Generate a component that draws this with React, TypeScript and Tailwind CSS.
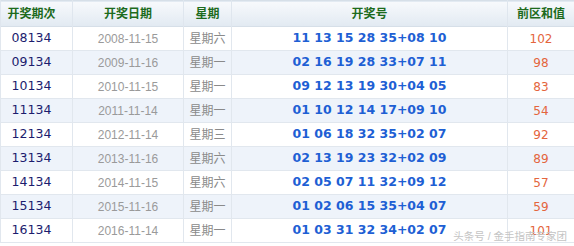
const rows = [
  ['08134', '2008-11-15', '星期六', '11 13 15 28 35+08 10', '102'],
  ['09134', '2009-11-16', '星期一', '02 16 19 28 33+07 11', '98'],
  ['10134', '2010-11-15', '星期一', '09 12 13 19 30+04 05', '83'],
  ['11134', '2011-11-14', '星期一', '01 10 12 14 17+09 10', '54'],
  ['12134', '2012-11-14', '星期三', '01 06 18 32 35+02 07', '92'],
  ['13134', '2013-11-16', '星期六', '02 13 19 23 32+02 09', '89'],
  ['14134', '2014-11-15', '星期六', '02 05 07 11 32+09 12', '57'],
  ['15134', '2015-11-16', '星期一', '01 02 06 15 35+04 07', '59'],
  ['16134', '2016-11-14', '星期一', '01 03 31 32 34+02 07', '101'],
]

const cjk = "font-['Liberation_Sans','Noto_Sans_CJK_SC',sans-serif]"

export default function App() {
  return (
    <div className="relative h-[246px] w-[574px] overflow-hidden bg-white">
      <table className="w-[574px] table-fixed border-collapse">
        <colgroup>
          <col className="w-[72px]" />
          <col className="w-[111px]" />
          <col className="w-[48px]" />
          <col className="w-[276px]" />
          <col className="w-[67px]" />
        </colgroup>
        <thead>
          <tr className="h-[26px] border-t border-b border-[#d6dfe8] bg-gradient-to-b from-[#f7f9fc] to-[#e2eaf2]">
            {['开奖期次', '开奖日期', '星期', '开奖号', '前区和值'].map((h, i) => (
              <th
                key={h}
                className={`border-x border-[#dfe6ee] p-0 text-center text-[12px] font-bold text-[#1d6b1d] ${cjk} ${i === 0 ? 'pr-[10px]' : ''}`}
              >
                {h}
              </th>
            ))}
          </tr>
        </thead>
        <tbody>
          {rows.map((r, i) => (
            <tr key={r[0]} className={`h-[24px] border-b border-[#e1e7ee] ${i % 2 ? 'bg-[#eef3fa]' : 'bg-white'}`}>
              <td className="border-x border-[#e1e7ee] p-0 pr-[10px] text-center font-['DejaVu_Sans',sans-serif] text-[12.5px] text-[#1c1c6e]">
                {r[0]}
              </td>
              <td className="border-x border-[#e1e7ee] p-0 text-center font-['Liberation_Sans',sans-serif] text-[12px] text-[#9a9a9a]">
                {r[1]}
              </td>
              <td className={`border-x border-[#e1e7ee] p-0 text-center text-[12px] text-[#8a8a8a] ${cjk}`}>
                {r[2]}
              </td>
              <td className="border-x border-[#e1e7ee] p-0 text-center font-['DejaVu_Sans',sans-serif] text-[12.5px] font-bold text-[#1e5fd4]">
                {r[3]}
              </td>
              <td className="border-x border-[#e1e7ee] p-0 text-center font-['DejaVu_Sans',sans-serif] text-[12px] text-[#e4653d]">
                {r[4]}
              </td>
            </tr>
          ))}
        </tbody>
      </table>
      <div className={`absolute right-[7px] bottom-[5px] text-[10.5px] leading-none text-[#c4c4c4] ${cjk}`}>头条号 / 金手指南专家团</div>
    </div>
  )
}
